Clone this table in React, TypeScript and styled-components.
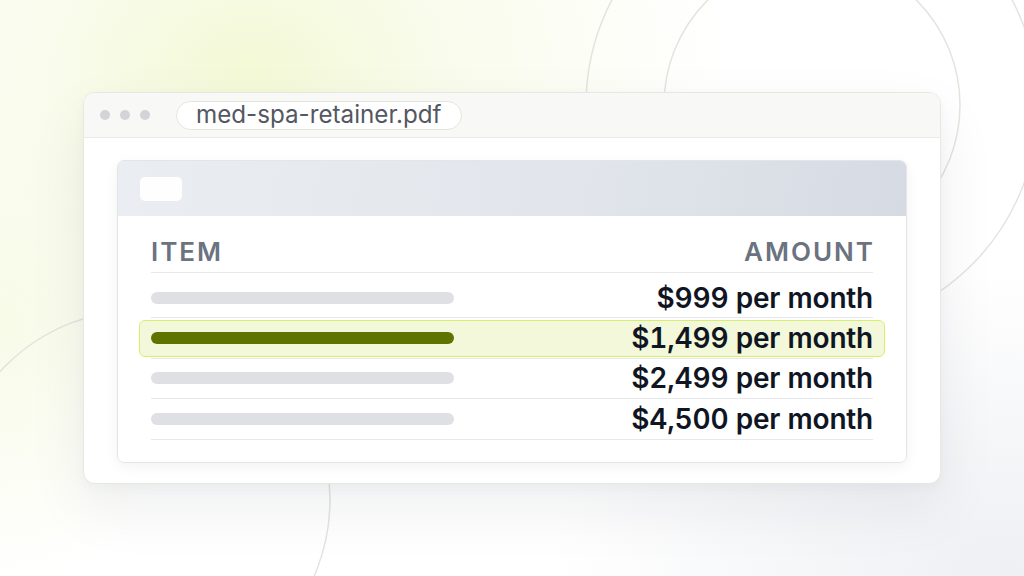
import React from "react";
import styled, { createGlobalStyle } from "styled-components";

const GlobalStyle = createGlobalStyle`
  *, *::before, *::after { box-sizing: border-box; }
  html, body { margin: 0; padding: 0; }
  body {
    font-family: Inter, "Noto Sans", "Liberation Sans", sans-serif;
    -webkit-font-smoothing: antialiased;
  }
`;

const Page = styled.div`
  position: relative;
  width: 1024px;
  height: 576px;
  overflow: hidden;
  display: flex;
  align-items: center;
  justify-content: center;
  background:
    radial-gradient(ellipse 480px 360px at 250px 70px, rgba(242, 248, 210, 0.9) 0%, rgba(246, 250, 226, 0.6) 45%, rgba(255, 255, 255, 0) 100%),
    radial-gradient(ellipse 200px 260px at 0px 330px, rgba(246, 250, 226, 0.8) 0%, rgba(255, 255, 255, 0) 100%),
    radial-gradient(ellipse 460px 300px at 1010px 570px, rgba(236, 238, 242, 0.9) 0%, rgba(255, 255, 255, 0) 100%),
    #ffffff;
`;

const Backdrop = styled.svg`
  position: absolute;
  inset: 0;
  width: 1024px;
  height: 576px;
  z-index: 0;
  pointer-events: none;
`;

const Window = styled.div`
  position: relative;
  z-index: 1;
  width: 858px;
  height: 392px;
  display: flex;
  flex-direction: column;
  background: #ffffff;
  border: 1px solid #e8e8e3;
  border-radius: 12px;
  overflow: hidden;
  box-shadow: 0 24px 60px rgba(15, 23, 42, 0.07), 0 4px 12px rgba(15, 23, 42, 0.03);
`;

const TitleBar = styled.div`
  height: 45px;
  flex: none;
  display: flex;
  align-items: center;
  padding-left: 16px;
  background: #f8f8f6;
  border-bottom: 1px solid #ebebe6;
`;

const Dots = styled.div`
  display: flex;
  gap: 10px;
  margin-right: 26px;
`;

const Dot = styled.span`
  width: 10px;
  height: 10px;
  border-radius: 50%;
  background: #d3d4d8;
`;

const FilePill = styled.div`
  height: 29px;
  display: flex;
  align-items: center;
  padding: 0 19px 1px;
  background: #ffffff;
  border: 1px solid #e4e4df;
  border-radius: 15px;
  font-size: 24.2px;
  font-weight: 400;
  color: #535862;
`;

const Body = styled.div`
  flex: 1;
  padding: 22px 33px 0;
`;

const Card = styled.div`
  background: #ffffff;
  border: 1px solid #e3e5e9;
  border-radius: 7px;
  overflow: hidden;
  box-shadow: 0 4px 14px rgba(15, 23, 42, 0.05);
`;

const CardHeader = styled.div`
  height: 55px;
  display: flex;
  align-items: center;
  padding-left: 22px;
  background: linear-gradient(100deg, #eaedf1 0%, #e2e6ec 55%, #d6dbe3 100%);
`;

const Chip = styled.div`
  width: 42px;
  height: 24px;
  border-radius: 5px;
  background: rgba(255, 255, 255, 0.92);
`;

const Table = styled.div`
  padding: 0 33px 22px;
`;

const HeadRow = styled.div`
  display: flex;
  justify-content: space-between;
  padding: 20px 0 4px;
  border-bottom: 1px solid #e7e8eb;
  margin-bottom: 5px;
`;

const HeadCell = styled.span<{ $right?: boolean }>`
  font-size: 26px;
  line-height: 32px;
  font-weight: 600;
  letter-spacing: 2px;
  color: #6b7280;
  margin-right: ${(p) => (p.$right ? "-2px" : "0")};
`;

const Row = styled.div<{ $active?: boolean }>`
  position: relative;
  height: 40.4px;
  display: flex;
  align-items: center;
  justify-content: space-between;
  border-bottom: 1px solid #e7e8eb;

  &::before {
    content: "";
    display: ${(p) => (p.$active ? "block" : "none")};
    position: absolute;
    left: -12px;
    right: -12px;
    top: 2px;
    bottom: 1px;
    background: #f2f8d9;
    border: 1.5px solid #d6ee6e;
    border-radius: 6px;
  }
`;

const Bar = styled.span<{ $active?: boolean }>`
  position: relative;
  width: 303px;
  height: 12px;
  border-radius: 6px;
  background: ${(p) => (p.$active ? "#5f7300" : "#dfe0e4")};
`;

const Amount = styled.span`
  position: relative;
  font-size: 28px;
  line-height: 34px;
  font-weight: 600;
  color: #0f1523;
  letter-spacing: -0.2px;
  font-variant-numeric: tabular-nums;
`;

const rows = [
  { amount: "$999 per month", active: false },
  { amount: "$1,499 per month", active: true },
  { amount: "$2,499 per month", active: false },
  { amount: "$4,500 per month", active: false },
];

export default function App() {
  return (
    <>
      <GlobalStyle />
      <Page>
        <Backdrop viewBox="0 0 1024 576" aria-hidden="true">
          <g fill="none" stroke="#e4e4df" strokeWidth="1.5">
            <circle cx="812" cy="105" r="148" />
            <circle cx="812" cy="105" r="226" />
            <circle cx="140" cy="500" r="190" />
          </g>
        </Backdrop>
        <Window>
          <TitleBar>
            <Dots>
              <Dot />
              <Dot />
              <Dot />
            </Dots>
            <FilePill>med-spa-retainer.pdf</FilePill>
          </TitleBar>
          <Body>
            <Card>
              <CardHeader>
                <Chip />
              </CardHeader>
              <Table>
                <HeadRow>
                  <HeadCell>ITEM</HeadCell>
                  <HeadCell $right>AMOUNT</HeadCell>
                </HeadRow>
                {rows.map((r) => (
                  <Row key={r.amount} $active={r.active}>
                    <Bar $active={r.active} />
                    <Amount>{r.amount}</Amount>
                  </Row>
                ))}
              </Table>
            </Card>
          </Body>
        </Window>
      </Page>
    </>
  );
}
